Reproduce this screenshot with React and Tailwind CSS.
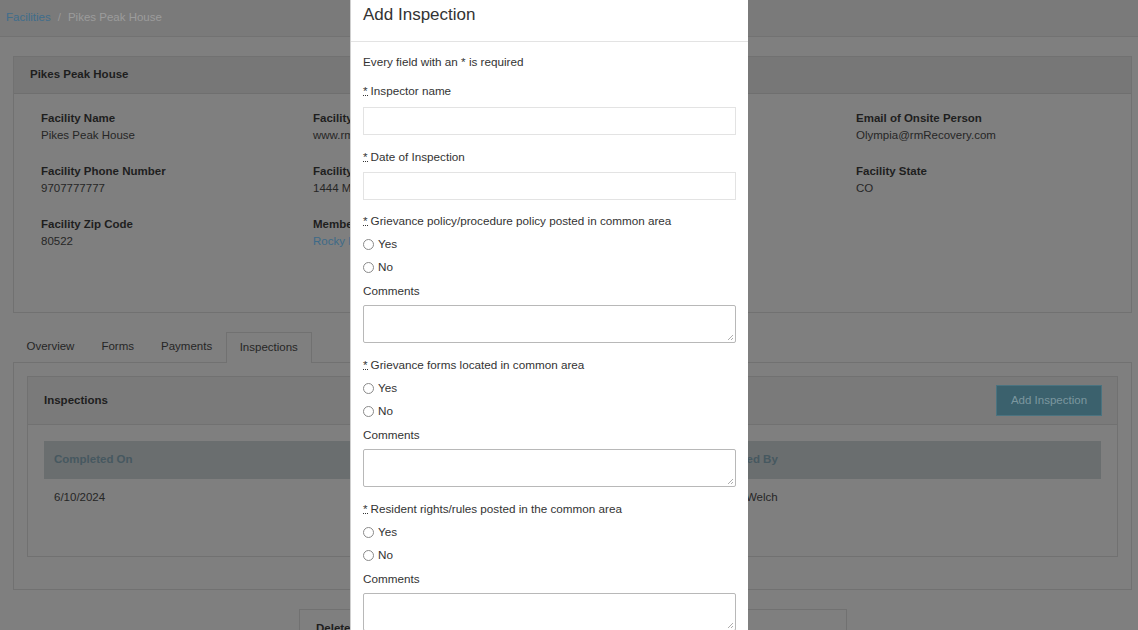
import React from "react";

const font = { fontFamily: '"Liberation Sans", Arial, sans-serif' };

function Field({ label, value, link }) {
  return (
    <div className="mb-[19px]">
      <div className="font-bold text-[11.5px] leading-[17px] text-[#1e1e1e]">{label}</div>
      <div className={`text-[11.5px] leading-[17px] ${link ? "text-[#3d6a88]" : "text-[#262626]"}`}>{value}</div>
    </div>
  );
}

function Req() {
  return (
    <abbr title="required" className="inline-block no-underline border-b border-dotted border-[#333] leading-[9px] h-[10px] mr-[3px] align-baseline">*</abbr>
  );
}

function Radio({ label }) {
  return (
    <label className="flex items-center gap-[4px] h-[16px] text-[11.7px] text-[#333]">
      <span className="w-[11px] h-[11px] rounded-full border border-[#8a8a8a] bg-white" />
      <span>{label}</span>
    </label>
  );
}

function Textarea() {
  return (
    <div className="relative h-[38px] border border-[#b8b8b8] rounded-[2px] bg-white">
      <svg className="absolute right-[1px] bottom-[1px]" width="7" height="7" viewBox="0 0 7 7">
        <path d="M6 1 L1 6 M6 4 L4 6" stroke="#999" strokeWidth="0.8" />
      </svg>
    </div>
  );
}

function Question({ label }) {
  return (
    <div>
      <div className="text-[11.7px] leading-[16px] text-[#333] h-[16px]">
        <Req />
        {label}
      </div>
      <div className="mt-[7px] flex flex-col gap-[7px]">
        <Radio label="Yes" />
        <Radio label="No" />
      </div>
      <div className="mt-[8px] text-[11.7px] leading-[16px] text-[#333]">Comments</div>
      <div className="mt-[6px]">
        <Textarea />
      </div>
    </div>
  );
}

export default function App() {
  return (
    <div style={font} className="relative w-[1138px] h-[630px] overflow-hidden bg-[#7f7f7f]">
      {/* Breadcrumb bar */}
      <div className="h-[37px] bg-[#7a7a7a] border-b border-[#727272] flex items-center px-[6px] text-[11.5px]">
        <span className="text-[#3f6d8c]">Facilities</span>
        <span className="mx-[7px] text-[#999]">/</span>
        <span className="text-[#9c9c9c]">Pikes Peak House</span>
      </div>

      {/* Facility card */}
      <div className="ml-[13px] mr-[6px] mt-[19px] border border-[#717171]">
        <div className="h-[37px] bg-[#777777] border-b border-[#6f6f6f] flex items-center px-[16px] font-bold text-[11.5px] text-[#1e1e1e]">
          Pikes Peak House
        </div>
        <div className="grid grid-cols-[272px_272px_271px_272px] pl-[27px] pt-[16px] pb-[43px]">
          <div>
            <Field label="Facility Name" value="Pikes Peak House" />
            <Field label="Facility Phone Number" value="9707777777" />
            <Field label="Facility Zip Code" value="80522" />
          </div>
          <div>
            <Field label="Facility Website" value="www.rmrecovery.com" />
            <Field label="Facility Address" value="1444 Main Street" />
            <Field label="Member Of" value="Rocky Mountain Recovery" link />
          </div>
          <div>
            <Field label="Onsite Person" value="Olympia" />
            <Field label="Facility City" value="Fort Collins" />
          </div>
          <div>
            <Field label="Email of Onsite Person" value="Olympia@rmRecovery.com" />
            <Field label="Facility State" value="CO" />
          </div>
        </div>
      </div>

      {/* Tabs */}
      <div className="ml-[13px] mr-[6px] mt-[19px]">
        <div className="flex items-end h-[31px] border-b border-[#717171] text-[11.5px] text-[#262626]">
          <div className="px-[13.5px] h-[30px] flex items-center">Overview</div>
          <div className="px-[13.5px] h-[30px] flex items-center">Forms</div>
          <div className="px-[13.5px] h-[30px] flex items-center">Payments</div>
          <div className="px-[13px] h-[31px] mb-[-1px] flex items-center border border-b-0 border-[#717171] bg-[#7f7f7f]">Inspections</div>
        </div>
        <div className="border border-t-0 border-[#717171] px-[13px] pt-[13px] pb-[32px]">
          <div className="border border-[#717171]">
            <div className="h-[48px] bg-[#7a7a7a] border-b border-[#717171] flex items-center justify-between pl-[16px] pr-[15px]">
              <span className="font-bold text-[11.5px] text-[#1e1e1e]">Inspections</span>
              <div className="h-[31px] w-[106px] flex items-center justify-center bg-[#3b616d] border border-[#4a7380] text-[11.5px] text-[#7b979f]">
                Add Inspection
              </div>
            </div>
            <div className="px-[16px] pt-[16px] pb-[39px]">
              <div className="h-[38px] bg-[#6a6e6f] grid grid-cols-2 items-center px-[10px] font-bold text-[11.5px] text-[#465860]">
                <span>Completed On</span>
                <span className="pl-[128px]">Completed By</span>
              </div>
              <div className="h-[38px] grid grid-cols-2 items-center px-[10px] text-[11.5px] text-[#262626]">
                <span>6/10/2024</span>
                <span className="pl-[128px]">Anthony Welch</span>
              </div>
            </div>
          </div>
        </div>
      </div>

      {/* Delete card */}
      <div className="ml-[299px] mt-[19px] w-[548px] h-[40px] border border-[#717171] px-[16px] pt-[10px] font-bold text-[11.5px] text-[#1e1e1e]">
        Delete Facility
      </div>

      {/* Modal */}
      <div className="absolute top-0 left-[350px] w-[398px] h-[630px] bg-white border-l border-[#cfcfcf] overflow-hidden">
        <div className="h-[42px] border-b border-[#e3e3e3] px-[12px] flex items-center">
          <span className="text-[17px] text-[#333] -mt-[12px]">Add Inspection</span>
        </div>
        <div className="px-[12px] pt-[12px]">
          <div className="text-[11.7px] leading-[16px] text-[#333]">Every field with an * is required</div>

          <div className="mt-[13px] text-[11.7px] leading-[16px] text-[#333]">
            <Req />Inspector name
          </div>
          <div className="mt-[8px] h-[28px] border border-[#e3e3e3]" />

          <div className="mt-[14px] text-[11.7px] leading-[16px] text-[#333]">
            <Req />Date of Inspection
          </div>
          <div className="mt-[7px] h-[28px] border border-[#e3e3e3]" />

          <div className="mt-[13px] flex flex-col gap-[14px]">
            <Question label="Grievance policy/procedure policy posted in common area" />
            <Question label="Grievance forms located in common area" />
            <Question label="Resident rights/rules posted in the common area" />
          </div>
        </div>
      </div>
    </div>
  );
}
